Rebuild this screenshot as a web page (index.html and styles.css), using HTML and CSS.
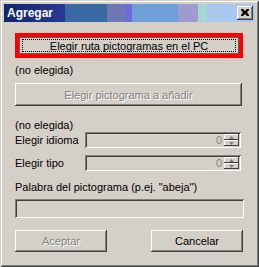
FILE: index.html
```html
<!DOCTYPE html>
<html>
<head>
<meta charset="utf-8">
<link rel="stylesheet" href="styles.css">
</head>
<body>
<div class="window">
  <div class="titlebar">
    <span class="title">Agregar</span>
    <span class="close"><svg width="8" height="7" viewBox="0 0 8 7"><path d="M0 0h2l2 2 2-2h2v1l-2 2.5 2 2.5v1h-2l-2-2-2 2h-2v-1l2-2.5-2-2.5z" fill="#000"/></svg></span>
  </div>
  <div class="content">
    <div class="redbtn"><div class="focus">Elegir ruta pictogramas en el PC</div></div>
    <div class="label l1">(no elegida)</div>
    <div class="btn wide disabled">Elegir pictograma a añadir</div>
    <div class="label l2">(no elegida)</div>
    <div class="row r1">
      <span class="rlabel">Elegir idioma</span>
      <div class="field spin"><span class="val">0</span><span class="arrows"><span class="arr up"><svg width="5" height="3" viewBox="0 0 5 3"><path d="M2.5 0L5 3H0z" fill="#808080"/></svg></span><span class="arr dn"><svg width="5" height="3" viewBox="0 0 5 3"><path d="M0 0h5L2.5 3z" fill="#808080"/></svg></span></span></div>
    </div>
    <div class="row r2">
      <span class="rlabel">Elegir tipo</span>
      <div class="field spin"><span class="val">0</span><span class="arrows"><span class="arr up"><svg width="5" height="3" viewBox="0 0 5 3"><path d="M2.5 0L5 3H0z" fill="#808080"/></svg></span><span class="arr dn"><svg width="5" height="3" viewBox="0 0 5 3"><path d="M0 0h5L2.5 3z" fill="#808080"/></svg></span></span></div>
    </div>
    <div class="label l3">Palabra del pictograma (p.ej. "abeja")</div>
    <div class="field text"></div>
    <div class="buttons">
      <div class="btn small disabled">Aceptar</div>
      <div class="btn small">Cancelar</div>
    </div>
  </div>
</div>
</body>
</html>
```
FILE: styles.css
```css
html, body {
  margin: 0;
  padding: 0;
  background: #d4d0c8;
}
body {
  font-family: "Liberation Sans", Arial, sans-serif;
  font-size: 11px;
  color: #000;
}
.window {
  width: 259px;
  height: 267px;
  box-sizing: border-box;
  padding: 4px 4px 0 4px;
  background: #d4d0c8;
  box-shadow: inset 1px 1px #d4d0c8, inset -1px -1px #404040, inset 2px 2px #fff, inset -2px -2px #808080;
}
.titlebar {
  height: 18px;
  display: flex;
  align-items: center;
  justify-content: space-between;
  padding: 0 3px 0 3px;
  background: linear-gradient(90deg,
    #0e2670 0px, #2a3896 61px,
    #3b6aa2 61px, #3b6aa2 103px,
    #6e78b2 103px, #6e78b2 121px,
    #6c6cd8 121px, #6c6cd8 128px,
    #6e9fd8 128px, #6e9fd8 174px,
    #9c9dcc 174px, #9c9dcc 194px,
    #a6d8d2 194px, #a6d8d2 203px,
    #a9c8ee 203px, #a9c8ee 100%);
}
.title {
  color: #fff;
  font-weight: bold;
  font-size: 12px;
}
.close {
  width: 16px;
  height: 14px;
  box-sizing: border-box;
  background: #d4d0c8;
  display: flex;
  align-items: center;
  justify-content: center;
  box-shadow: inset -1px -1px #404040, inset 1px 1px #fff, inset -2px -2px #808080;
  margin-right: -1px;
}
.close svg { display: block; margin-top: -1px; }
.content {
  display: flex;
  flex-direction: column;
  padding: 11px 11px 0 11px;
}
.redbtn {
  width: 228px;
  height: 25px;
  box-sizing: border-box;
  border: 4px solid #ff0000;
  background: #d4d0c8;
  padding: 2px 3px;
  box-shadow: inset 0 0 0 1px #606060;
}
.focus {
  height: 100%;
  box-sizing: border-box;
  border: 1px dotted #000;
  display: flex;
  align-items: center;
  justify-content: center;
  padding-top: 1px;
}
.label {
  height: 13px;
  line-height: 13px;
}
.l1 { margin-top: 6px; }
.l2 { margin-top: 13px; }
.l3 { margin-top: 10px; }
.btn {
  box-sizing: border-box;
  display: flex;
  align-items: center;
  justify-content: center;
  background: #d4d0c8;
  box-shadow: inset -1px -1px #404040, inset 1px 1px #fff, inset -2px -2px #808080;
}
.wide {
  width: 227px;
  height: 23px;
  margin-top: 6px;
}
.disabled {
  color: #808080;
  text-shadow: 1px 1px 0 #fff;
}
.row {
  display: flex;
  align-items: center;
  height: 16px;
}
.r1 { margin-top: 0px; }
.r2 { margin-top: 7px; }
.rlabel {
  width: 70px;
}
.field {
  box-sizing: border-box;
  background: #d4d0c8;
  box-shadow: inset 1px 1px #808080, inset -1px -1px #fff, inset 2px 2px #404040, inset -2px -2px #d4d0c8;
}
.spin {
  width: 156px;
  height: 16px;
  display: flex;
  align-items: center;
  justify-content: flex-end;
  padding: 2px 2px 2px 2px;
}
.val {
  color: #808080;
  margin-right: 2px;
}
.arrows {
  display: flex;
  flex-direction: column;
  width: 15px;
  height: 12px;
}
.arr {
  flex: 1;
  display: flex;
  align-items: center;
  justify-content: center;
  background: #d4d0c8;
  box-shadow: inset -1px -1px #404040, inset 1px 1px #fff;
}
.arr svg { display: block; }
.text {
  width: 229px;
  height: 19px;
  margin-top: 5px;
}
.buttons {
  display: flex;
  justify-content: space-between;
  width: 228px;
  margin-top: 12px;
}
.small {
  width: 92px;
  height: 22px;
}
```
